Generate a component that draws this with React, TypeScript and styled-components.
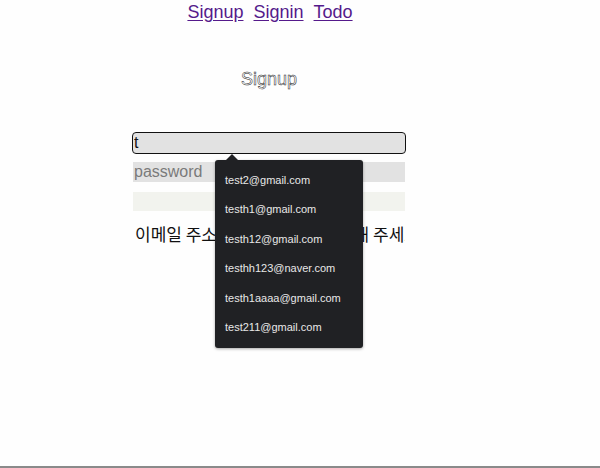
import React from "react";
import styled, { createGlobalStyle } from "styled-components";

const Global = createGlobalStyle`
  html, body { margin: 0; padding: 0; background: #fefefe; }
  body { font-family: "Liberation Sans", Arial, sans-serif; }
  * { box-sizing: border-box; }
`;

const Page = styled.div`
  position: relative;
  width: 600px;
  height: 468px;
  overflow: hidden;
  border-bottom: 2px solid #8a8a8a;
`;

const Column = styled.div`
  width: 538px;
  display: flex;
  flex-direction: column;
  align-items: center;
`;

const Nav = styled.nav`
  display: flex;
  gap: 10px;
  padding-top: 1px;
  padding-left: 2px;
  height: 24px;
`;

const NavLink = styled.a`
  font-size: 18px;
  line-height: 22px;
  color: #551a8b;
  text-decoration: underline;
  text-underline-offset: 2px;
`;

const Title = styled.h1`
  margin: 44px 0 0;
  font-size: 18px;
  font-weight: normal;
  line-height: 22px;
  color: #ffffff;
  -webkit-text-stroke: 0.5px #222;
`;

const Form = styled.form`
  width: 272px;
  margin-top: 43px;
  display: flex;
  flex-direction: column;
  position: relative;
`;

const Input = styled.input<{ $focused?: boolean }>`
  width: 272px;
  height: 20px;
  border: none;
  padding: 0 0 0 1px;
  margin: 0;
  background: #e2e2e2;
  font-family: "Liberation Sans", Arial, sans-serif;
  font-size: 16px;
  color: #111;
  border-radius: ${(p) => (p.$focused ? "3px" : "0")};
  outline: ${(p) => (p.$focused ? "1.5px solid #111" : "none")};
  outline-offset: 0;
  &::placeholder { color: #7a7a7a; }
`;

const Spacer = styled.div<{ $h: number }>`
  height: ${(p) => p.$h}px;
`;

const Submit = styled.button`
  width: 272px;
  height: 19px;
  border: none;
  background: #f2f3ee;
  padding: 0;
`;

const Message = styled.p`
  margin: 12px 0 0;
  width: 272px;
  overflow: hidden;
  white-space: nowrap;
  font-family: "Noto Sans CJK KR", sans-serif;
  font-size: 17px;
  line-height: 22px;
  color: #111;
  padding-left: 2px;
`;

const Dropdown = styled.ul`
  position: absolute;
  left: 215px;
  top: 160px;
  width: 148px;
  margin: 0;
  padding: 5px 0 6px;
  list-style: none;
  background: #202124;
  border-radius: 3px;
  box-shadow: 0 1px 3px rgba(0, 0, 0, 0.35);
  &::before {
    content: "";
    position: absolute;
    left: 10px;
    top: -6px;
    border-left: 7px solid transparent;
    border-right: 7px solid transparent;
    border-bottom: 7px solid #202124;
  }
`;

const Item = styled.li`
  height: 29.5px;
  display: flex;
  align-items: center;
  padding-left: 10px;
  font-family: "Liberation Sans", Arial, sans-serif;
  font-size: 11px;
  color: #e8e8e8;
`;

const emails = [
  "test2@gmail.com",
  "testh1@gmail.com",
  "testh12@gmail.com",
  "testhh123@naver.com",
  "testh1aaaa@gmail.com",
  "test211@gmail.com",
];

export default function App() {
  return (
    <Page>
      <Global />
      <Column>
        <Nav>
          <NavLink href="#">Signup</NavLink>
          <NavLink href="#">Signin</NavLink>
          <NavLink href="#">Todo</NavLink>
        </Nav>
        <Title>Signup</Title>
        <Form onSubmit={(e) => e.preventDefault()}>
          <Input $focused defaultValue="t" readOnly />
          <Spacer $h={9} />
          <Input placeholder="password" type="password" readOnly />
          <Spacer $h={10} />
          <Submit type="submit" />
          <Message>이메일 주소 형식에 맞도록 입력해 주세요</Message>
        </Form>
      </Column>
      <Dropdown>
        {emails.map((e) => (
          <Item key={e}>{e}</Item>
        ))}
      </Dropdown>
    </Page>
  );
}
